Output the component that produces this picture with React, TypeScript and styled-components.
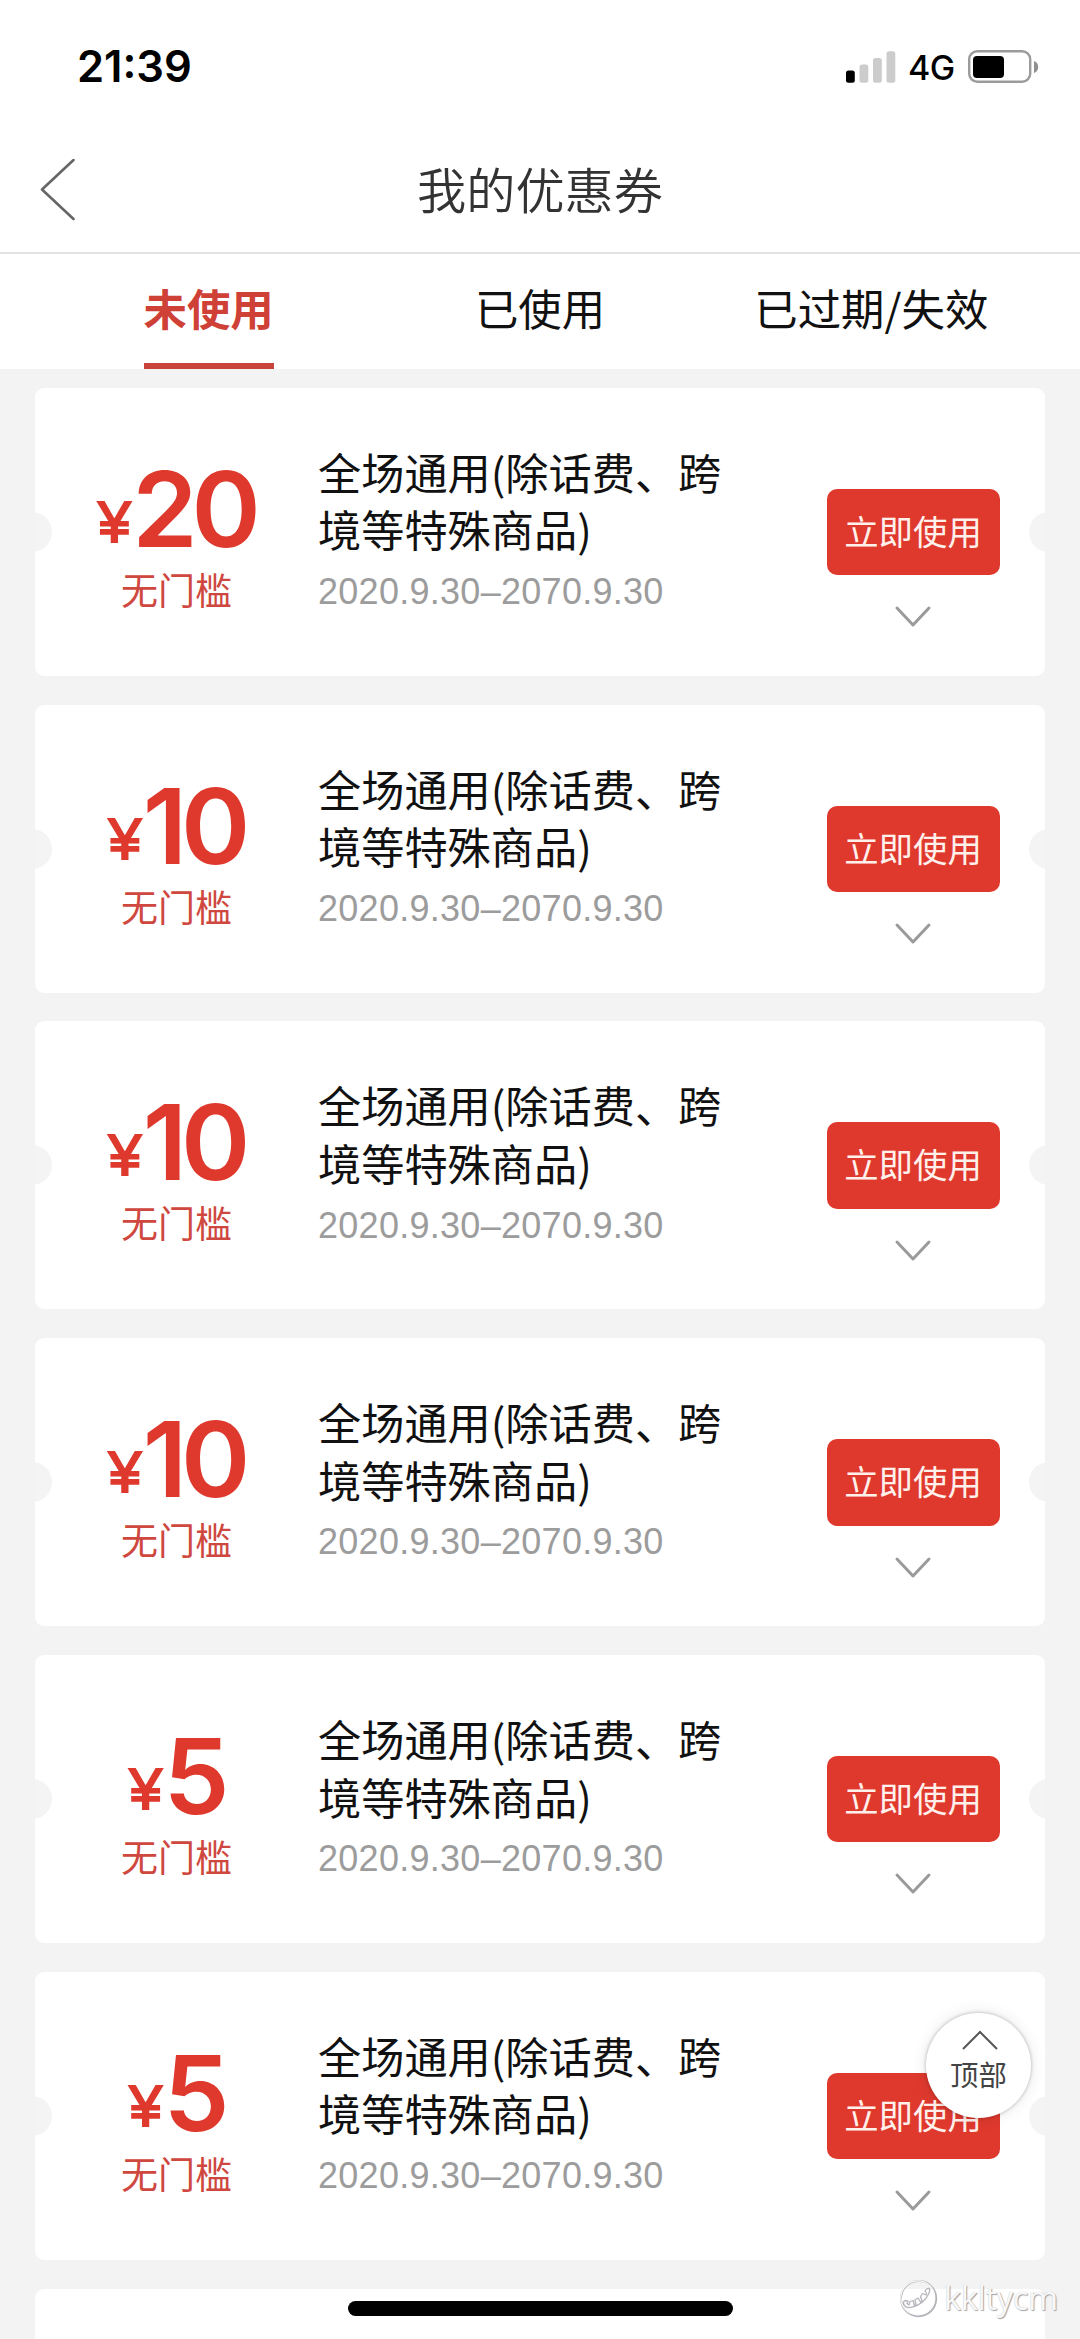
import React from "react";
import styled, { createGlobalStyle } from "styled-components";

const CJK = `"Noto Sans CJK SC", sans-serif`;
const LATIN = `"Liberation Sans", "Noto Sans CJK SC", sans-serif`;
const RED = "#df392e";

const GlobalStyle = createGlobalStyle`
  *, *::before, *::after { box-sizing: border-box; }
  body { margin: 0; background: #f3f3f3; }
  button { border: 0; padding: 0; margin: 0; background: none; font: inherit; }
`;

const Screen = styled.div`
  position: relative;
  width: 1080px;
  height: 2339px;
  overflow: hidden;
  display: flex;
  flex-direction: column;
  background: #f3f3f3;
  font-family: ${CJK};
`;

const StatusBar = styled.div`
  flex: none;
  height: 127px;
  padding: 6px 41px 0 77px;
  display: flex;
  align-items: center;
  justify-content: space-between;
  background: #fff;
`;

const Clock = styled.span`
  font: 600 43.5px/1 Inter, sans-serif;
  color: #000;
`;

const StatusIcons = styled.div`
  display: flex;
  align-items: center;
`;

const Network = styled.span`
  width: 60px;
  margin-left: 12px;
  padding-top: 2px;
  font: 500 34px/1 Inter, sans-serif;
  letter-spacing: -0.5px;
`;

const NavBar = styled.header`
  flex: none;
  height: 127px;
  padding: 0 38px;
  display: grid;
  grid-template-columns: 40px 1fr 40px;
  align-items: center;
  background: #fff;
  border-bottom: 2px solid #e3e3e3;
`;

const BackButton = styled.button`
  display: flex;
`;

const Title = styled.h1`
  margin: 0;
  padding-bottom: 4px;
  text-align: center;
  font-size: 49.2px;
  line-height: 60px;
  font-weight: 350;
  color: #333;
`;

const Tabs = styled.nav`
  flex: none;
  height: 115px;
  padding: 0 43px;
  display: grid;
  grid-template-columns: repeat(3, 1fr);
  justify-items: center;
  background: #fff;
`;

const Tab = styled.button<{ $active?: boolean }>`
  height: 115px;
  padding-bottom: ${(p) => (p.$active ? 1 : 7)}px;
  border-bottom: ${(p) => (p.$active ? `6px solid #c8433c` : "0")};
  font-size: 43.4px;
  line-height: 1;
  font-weight: ${(p) => (p.$active ? 700 : 400)};
  color: ${(p) => (p.$active ? "#cf4037" : "#111")};
`;

const List = styled.main`
  padding: 18.8px 35px 0;
  display: flex;
  flex-direction: column;
  gap: 28.8px;
`;

const Card = styled.article`
  flex: none;
  position: relative;
  overflow: hidden;
  height: 288px;
  border-radius: 9px;
  background: #fff;
  display: grid;
  grid-template-columns: 284px 1fr 219px;

  &::before,
  &::after {
    content: "";
    position: absolute;
    top: 124px;
    width: 40px;
    height: 40px;
    border-radius: 50%;
    background: #f4f4f4;
  }
  &::before { left: -23px; }
  &::after { right: -24px; }
`;

const Value = styled.div`
  padding: 66px 1px 0 0;
  display: flex;
  flex-direction: column;
  align-items: center;
  color: ${RED};
`;

const Amount = styled.div`
  display: flex;
  align-items: baseline;
  height: 110px;
  font-family: Inter, sans-serif;
  font-size: 105px;
  font-weight: 560;
  line-height: 110px;
  letter-spacing: -6px;
`;

const Currency = styled.span`
  width: 34px;
  font-family: ${LATIN};
  font-size: 58px;
  font-weight: 400;
  line-height: 1;
  letter-spacing: 0;
  -webkit-text-stroke: 2.2px ${RED};
  transform: translateY(-5px);
`;

const Threshold = styled.div`
  margin-top: 5px;
  font-size: 37px;
  line-height: 40px;
  color: #cf4840;
`;

const Info = styled.div`
  padding-top: 55px;
`;

const Name = styled.h2`
  margin: 0 0 0 -1px;
  width: 410px;
  font-size: 43.2px;
  line-height: 57.6px;
  font-weight: 400;
  color: #111;
`;

const Period = styled.div`
  margin: 13px 0 0 -1px;
  font-family: ${LATIN};
  font-size: 36px;
  line-height: 42px;
  letter-spacing: 0.28px;
  color: #9c9c9c;
`;

const Actions = styled.div`
  padding: 101px 0 0 0.5px;
  display: flex;
  flex-direction: column;
  align-items: flex-start;
`;

const UseButton = styled.button`
  width: 173px;
  height: 86.4px;
  border-radius: 10px;
  background: ${RED};
  color: #fff0ec;
  font-size: 34.4px;
  line-height: 1;
  padding-bottom: 4px;
`;

const Expand = styled.button`
  width: 173px;
  margin-top: 30px;
  display: flex;
  justify-content: center;
`;

const TopButton = styled.button`
  position: absolute;
  left: 926px;
  top: 2013px;
  width: 105px;
  height: 105px;
  border-radius: 50%;
  background: #fff;
  box-shadow: 0 0 3px 1px rgba(0, 0, 0, 0.16), 0 0 16px rgba(0, 0, 0, 0.1);
  display: flex;
  flex-direction: column;
  align-items: center;
  padding-top: 17px;
  font-size: 28.4px;
  line-height: 32px;
  color: #444;

  svg { margin: 0 0 7px 3px; }
`;

const HomeIndicator = styled.div`
  position: absolute;
  left: 348px;
  top: 2301px;
  width: 385px;
  height: 15px;
  border-radius: 8px;
  background: #000;
`;

const Watermark = styled.div`
  position: absolute;
  left: 898px;
  top: 2278px;
  display: flex;
  align-items: center;
  gap: 6px;
  font: 400 32.5px/40px "Open Sans", sans-serif;
  letter-spacing: -0.3px;
  color: #f8f8f8;
  text-shadow: 1px 1px 1px #a0a0a6, 0 0 1px #c4c4c8;
`;

const SignalIcon = () => (
  <svg width="50" height="32" viewBox="0 0 50 32">
    <rect x="0" y="19.5" width="8.8" height="12.3" rx="2.5" fill="#000" />
    <rect x="13.5" y="13.5" width="8.8" height="18.3" rx="2.5" fill="#ccc" />
    <rect x="27" y="7" width="8.8" height="24.8" rx="2.5" fill="#ccc" />
    <rect x="40.5" y="0.3" width="8.8" height="31.5" rx="2.5" fill="#ccc" />
  </svg>
);

const BatteryIcon = () => (
  <svg width="71" height="34" viewBox="0 0 71 34">
    <rect x="1.2" y="1.2" width="61" height="30.6" rx="8" fill="#fff" stroke="#9b9b9b" strokeWidth="2.4" />
    <rect x="5" y="6" width="31" height="22" rx="4" fill="#000" />
    <path d="M66 11c3 1 4.200 3.500 4.200 6s-1.200 5-4.200 6z" fill="#8f8f8f" />
  </svg>
);

const ChevronLeft = () => (
  <svg width="38" height="62" viewBox="0 0 38 62" fill="none" stroke="#666" strokeWidth="2.6" strokeLinecap="round" strokeLinejoin="round">
    <path d="M35.500 1 4 30.500l31.500 29.500" />
  </svg>
);

const ChevronDown = () => (
  <svg width="38" height="24" viewBox="0 0 38 24" fill="none" stroke="#9a9a9a" strokeWidth="3" strokeLinecap="round" strokeLinejoin="round">
    <path d="M3 3l16 17L35 3" />
  </svg>
);

const ChevronUp = () => (
  <svg width="38" height="21" viewBox="0 0 38 21" fill="none" stroke="#555" strokeWidth="2">
    <path d="M2 19 19 2l17 17" />
  </svg>
);

const WatermarkIcon = () => (
  <svg width="40" height="40" viewBox="0 0 40 40" fill="none" strokeLinecap="round" strokeLinejoin="round">
    <circle cx="20.600" cy="20.600" r="17.600" stroke="#b4b4ba" strokeWidth="2" />
    <circle cx="19.800" cy="19.800" r="17" stroke="#fbfbfb" strokeWidth="1.200" />
    <path
      d="M5.500 24l1.500-1.500 3 .5-1 2.500 2 1.500 1-3.500 3-1 1.500 5 1.500-.5-1-5 3-2 2.500 4 1.500-1-1.500-4.500 2-3 3.500 1.500.5-1.500-1.500-2.500c1-2 2.500-3 4.500-2.500 1 2-1.500 9-7 13.500s-14 7-17 4.500c-1.500-1-2.500-2.500-2-4.500z"
      fill="#fcfcfc"
      stroke="#b6b6bd"
      strokeWidth="1.300"
    />
  </svg>
);

const TABS = ["未使用", "已使用", "已过期/失效"];
const AMOUNTS = [20, 10, 10, 10, 5, 5];

const Coupon = ({ amount }: { amount: number }) => (
  <Card>
    <Value>
      <Amount>
        <Currency>¥</Currency>
        {amount}
      </Amount>
      <Threshold>无门槛</Threshold>
    </Value>
    <Info>
      <Name>全场通用(除话费、跨境等特殊商品)</Name>
      <Period>2020.9.30–2070.9.30</Period>
    </Info>
    <Actions>
      <UseButton>立即使用</UseButton>
      <Expand aria-label="展开">
        <ChevronDown />
      </Expand>
    </Actions>
  </Card>
);

export default function App() {
  return (
    <Screen>
      <GlobalStyle />
      <StatusBar>
        <Clock>21:39</Clock>
        <StatusIcons>
          <SignalIcon />
          <Network>4G</Network>
          <BatteryIcon />
        </StatusIcons>
      </StatusBar>
      <NavBar>
        <BackButton aria-label="返回">
          <ChevronLeft />
        </BackButton>
        <Title>我的优惠券</Title>
      </NavBar>
      <Tabs>
        {TABS.map((label, i) => (
          <Tab key={label} $active={i === 0}>
            {label}
          </Tab>
        ))}
      </Tabs>
      <List>
        {AMOUNTS.map((amount, i) => (
          <Coupon key={i} amount={amount} />
        ))}
        <Card />
      </List>
      <TopButton>
        <ChevronUp />
        顶部
      </TopButton>
      <HomeIndicator />
      <Watermark>
        <WatermarkIcon />
        kkltycm
      </Watermark>
    </Screen>
  );
}
